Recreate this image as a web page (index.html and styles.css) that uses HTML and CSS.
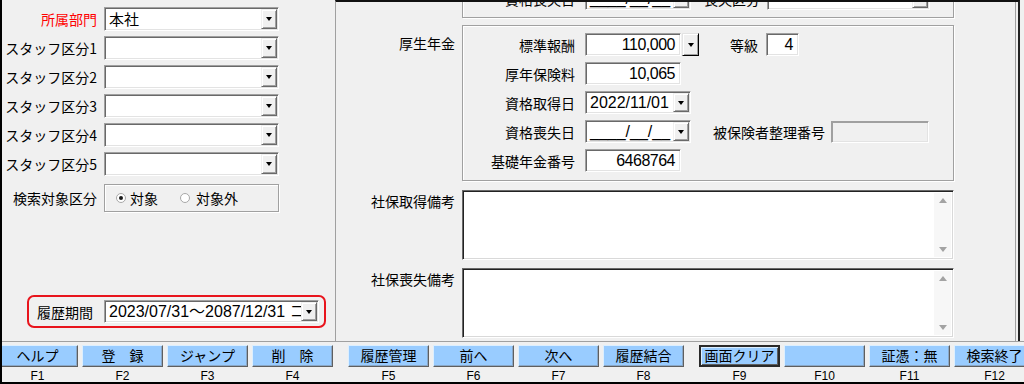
FILE: index.html
```html
<!DOCTYPE html>
<html lang="ja">
<head>
<meta charset="utf-8">
<title>社保情報</title>
<link rel="stylesheet" href="styles.css">
</head>
<body>
<div class="app">
  <div class="form">
    <div class="left">
      <div class="row"><span class="lbl red">所属部門</span><div class="combo w175"><span class="cv">本社</span><span class="dd"></span></div></div>
      <div class="row"><span class="lbl">スタッフ区分1</span><div class="combo w175"><span class="cv"></span><span class="dd"></span></div></div>
      <div class="row"><span class="lbl">スタッフ区分2</span><div class="combo w175"><span class="cv"></span><span class="dd"></span></div></div>
      <div class="row"><span class="lbl">スタッフ区分3</span><div class="combo w175"><span class="cv"></span><span class="dd"></span></div></div>
      <div class="row"><span class="lbl">スタッフ区分4</span><div class="combo w175"><span class="cv"></span><span class="dd"></span></div></div>
      <div class="row"><span class="lbl">スタッフ区分5</span><div class="combo w175"><span class="cv"></span><span class="dd"></span></div></div>
      <div class="row radio-row"><span class="lbl">検索対象区分</span>
        <div class="radiogroup">
          <span class="radio on"></span><span class="rtext">対象</span>
          <span class="radio second"></span><span class="rtext">対象外</span>
        </div>
      </div>
      <div class="period">
        <span class="plbl">履歴期間</span>
        <div class="combo pcombo"><span class="cv">2023/07/31～2087/12/31 コ</span><span class="dd"></span></div>
      </div>
    </div>
    <div class="right">
      <div class="sec top-sec">
        <div class="side"></div>
        <div class="group top-group">
          <div class="frow">
            <span class="flbl">資格喪失日</span>
            <div class="combo w106"><span class="cv">____/__/__</span><span class="dd"></span></div>
            <span class="olbl lbl-soushitsu">喪失区分</span>
            <div class="combo w163"><span class="cv"></span><span class="dd"></span></div>
          </div>
        </div>
      </div>
      <div class="sec kousei">
        <div class="side">厚生年金</div>
        <div class="group main-group">
          <div class="frow">
            <span class="flbl">標準報酬</span>
            <div class="field w96 num">110,000</div>
            <span class="dd solo"></span>
            <span class="olbl lbl-tokyu">等級</span>
            <div class="field w33 num">4</div>
          </div>
          <div class="frow">
            <span class="flbl">厚年保険料</span>
            <div class="field w96 num">10,065</div>
          </div>
          <div class="frow">
            <span class="flbl">資格取得日</span>
            <div class="combo w106"><span class="cv">2022/11/01</span><span class="dd"></span></div>
          </div>
          <div class="frow">
            <span class="flbl">資格喪失日</span>
            <div class="combo w106"><span class="cv">____/__/__</span><span class="dd"></span></div>
            <span class="olbl lbl-hihoken">被保険者整理番号</span>
            <div class="field w98 disabled"></div>
          </div>
          <div class="frow">
            <span class="flbl">基礎年金番号</span>
            <div class="field w96 num">6468764</div>
          </div>
        </div>
      </div>
      <div class="sec memo-sec">
        <div class="side memo-lbl">社保取得備考</div>
        <div class="memo"><div class="memo-body"></div><div class="sb"><span class="up"></span><span class="down"></span></div></div>
      </div>
      <div class="sec memo-sec second-memo">
        <div class="side memo-lbl">社保喪失備考</div>
        <div class="memo"><div class="memo-body"></div><div class="sb"><span class="up"></span><span class="down"></span></div></div>
      </div>
    </div>
  </div>
  <div class="toolbar">
    <div class="kgroup">
      <div class="key"><div class="btn">ヘルプ</div><span class="fk">F1</span></div>
      <div class="key"><div class="btn">登　録</div><span class="fk">F2</span></div>
      <div class="key"><div class="btn">ジャンプ</div><span class="fk">F3</span></div>
      <div class="key"><div class="btn">削　除</div><span class="fk">F4</span></div>
    </div>
    <div class="kgroup">
      <div class="key"><div class="btn">履歴管理</div><span class="fk">F5</span></div>
      <div class="key"><div class="btn">前へ</div><span class="fk">F6</span></div>
      <div class="key"><div class="btn">次へ</div><span class="fk">F7</span></div>
      <div class="key"><div class="btn">履歴結合</div><span class="fk">F8</span></div>
    </div>
    <div class="kgroup">
      <div class="key"><div class="btn focus">画面クリア</div><span class="fk">F9</span></div>
      <div class="key"><div class="btn"></div><span class="fk">F10</span></div>
      <div class="key"><div class="btn">証憑：無</div><span class="fk">F11</span></div>
      <div class="key"><div class="btn">検索終了</div><span class="fk">F12</span></div>
    </div>
  </div>
</div>
</body>
</html>
```
FILE: styles.css
```css
* { box-sizing: border-box; margin: 0; padding: 0; }
html, body { width: 1024px; height: 384px; overflow: hidden; background: #f0f0f0; }
body {
  font-family: "Noto Sans CJK JP", "Noto Sans", sans-serif;
  font-size: 14px;
  color: #000;
}
.app {
  width: 1024px;
  height: 384px;
  display: flex;
  flex-direction: column;
  border-left: 2px solid #000;
  border-bottom: 2px solid #000;
  overflow: hidden;
}
.form {
  display: flex;
  height: 342px;
  flex-shrink: 0;
  border-bottom: 1px solid #a0a0a0;
}

/* ---------- left panel ---------- */
.left {
  width: 333px;
  flex-shrink: 0;
  display: flex;
  flex-direction: column;
  padding-top: 7px;
}
.row {
  display: flex;
  align-items: center;
  height: 24px;
  margin-bottom: 5px;
}
.lbl {
  width: 95px;
  margin-right: 7px;
  text-align: right;
  white-space: nowrap;
  line-height: 24px;
}
.red { color: #f00; }
.radio-row { margin-top: 3px; height: 28px; }
.radiogroup {
  width: 175px;
  height: 28px;
  border: 1px solid #a0a0a0;
  box-shadow: inset 1px 1px 0 #fff, 1px 1px 0 #fff;
  display: flex;
  align-items: center;
  padding-left: 11px;
}
.radio {
  width: 10px;
  height: 10px;
  border-radius: 50%;
  border: 1px solid #a8a8a8;
  background: #fff;
  display: flex;
  align-items: center;
  justify-content: center;
  margin-right: 4px;
}
.radio.on::after {
  content: "";
  width: 4px;
  height: 4px;
  border-radius: 50%;
  background: #1a1a1a;
}
.radio.second { margin-left: 22px; margin-right: 6px; }
.rtext { line-height: 20px; }

.period {
  margin-top: auto;
  margin-bottom: 13px;
  margin-left: 25px;
  width: 299px;
  height: 33px;
  border: 2px solid #e8141c;
  border-radius: 7px;
  display: flex;
  align-items: center;
  padding-left: 8px;
}
.plbl { width: 58px; margin-right: 9px; white-space: nowrap; }
.pcombo { width: 215px; height: 22px; }

/* ---------- combos / fields ---------- */
.combo {
  display: flex;
  height: 23px;
  background: #fff;
  border: 1px solid;
  border-color: #a0a0a0 #fff #fff #a0a0a0;
  box-shadow: inset 1px 1px 0 #696969, inset -1px -1px 0 #e3e3e3;
  padding: 1px;
  flex-shrink: 0;
}
.row .combo { height: 24px; }
.w175 { width: 175px; }
.w106 { width: 106px; }
.w163 { width: 163px; }
.w96 { width: 96px; }
.w98 { width: 98px; }
.w33 { width: 33px; }
.cv {
  flex: 1;
  min-width: 0;
  overflow: hidden;
  white-space: nowrap;
  padding-left: 3px;
  font-family: "Liberation Sans", "Noto Sans CJK JP", sans-serif;
  font-size: 16px;
  line-height: 19px;
}
.row .cv {
  font-family: "Noto Sans CJK JP", sans-serif;
  font-size: 15px;
  line-height: 20px;
}
.dd {
  width: 16px;
  flex-shrink: 0;
  background: #f0f0f0;
  border: 1px solid;
  border-color: #f0f0f0 #696969 #696969 #f0f0f0;
  box-shadow: inset 1px 1px 0 #fff, inset -1px -1px 0 #a0a0a0;
  display: flex;
  align-items: center;
  justify-content: center;
}
.dd::after {
  content: "";
  width: 0;
  height: 0;
  border-left: 3.5px solid transparent;
  border-right: 3.5px solid transparent;
  border-top: 4px solid #000;
}
.dd.solo {
  width: 17px;
  height: 23px;
  margin-left: 1px;
  border-color: #e3e3e3 #000 #000 #e3e3e3;
}
.field {
  height: 23px;
  flex-shrink: 0;
  background: #fff;
  border: 1px solid;
  border-color: #a0a0a0 #fff #fff #a0a0a0;
  box-shadow: inset 1px 1px 0 #696969, inset -1px -1px 0 #e3e3e3;
  padding: 1px 5px 0 3px;
  text-align: right;
  white-space: nowrap;
}
.num {
  font-family: "Liberation Sans", sans-serif;
  font-size: 16px;
  letter-spacing: -0.5px;
  line-height: 19px;
}
.field.disabled {
  height: 22px;
  background: #f0f0f0;
  box-shadow: inset 1px 1px 0 #a0a0a0, inset -1px -1px 0 #e3e3e3;
}

/* ---------- right panel ---------- */
.right {
  width: 685px;
  flex-shrink: 0;
  border-left: 1px solid #a0a0a0;
  border-top: 2px solid #111;
  border-right: 2px solid #222;
  box-shadow: inset -2px 0 0 #f0f0f0, inset -3px 0 0 #a0a0a0;
  overflow: hidden;
  display: flex;
  flex-direction: column;
}
.sec { display: flex; flex-shrink: 0; }
.side {
  width: 119px;
  margin-right: 7px;
  flex-shrink: 0;
  text-align: right;
  white-space: nowrap;
}
.group {
  width: 492px;
  border: 1px solid #a0a0a0;
  box-shadow: inset 1px 1px 0 #fff, 1px 1px 0 #fff;
}
.top-sec { margin-top: -40px; }
.top-group { padding: 24px 0 7px; }
.kousei { margin-top: 7px; }
.kousei .side { padding-top: 8px; line-height: 20px; }
.main-group { padding: 7px 0 8px; }
.frow {
  display: flex;
  align-items: center;
  height: 23px;
  margin-bottom: 6px;
}
.frow:last-child { margin-bottom: 0; }
.flbl {
  width: 112px;
  margin-right: 10px;
  text-align: right;
  white-space: nowrap;
}
.olbl { white-space: nowrap; }
.lbl-soushitsu { margin-left: 13px; margin-right: 7px; }
.lbl-tokyu { margin-left: 31px; margin-right: 8px; }
.lbl-hihoken { margin-left: 22px; margin-right: 6px; }

.memo-sec { margin-top: 9px; }
.memo-sec.second-memo { margin-top: 8px; }
.memo-lbl { padding-top: 1px; line-height: 20px; }
.memo {
  width: 492px;
  height: 70px;
  display: flex;
  background: #fff;
  border: 1px solid;
  border-color: #696969 #fff #fff #696969;
  box-shadow: inset 1px 1px 0 #222, inset -1px -1px 0 #d9d9d9;
  padding: 2px 2px 2px 2px;
}
.memo-body { flex: 1; }
.sb {
  width: 17px;
  background: #f7f7f7;
  display: flex;
  flex-direction: column;
  justify-content: space-between;
  align-items: center;
  padding: 5px 0 5px;
}
.up, .down {
  width: 0;
  height: 0;
  border-left: 4.5px solid transparent;
  border-right: 4.5px solid transparent;
}
.up { border-bottom: 5px solid #a3a3a3; }
.down { border-top: 5px solid #a3a3a3; }

/* ---------- toolbar ---------- */
.toolbar {
  display: flex;
  gap: 15px;
  margin-left: -5px;
  padding-top: 3px;
  flex-shrink: 0;
}
.kgroup { display: flex; gap: 4px; flex-shrink: 0; }
.key {
  width: 81px;
  flex-shrink: 0;
  display: flex;
  flex-direction: column;
  align-items: center;
}
.btn {
  width: 100%;
  height: 22px;
  background: #99ccff;
  border: 1px solid;
  border-color: #dcefff #5f5f5f #5f5f5f #dcefff;
  box-shadow: inset -1px -1px 0 #8aa8c8;
  text-align: center;
  line-height: 19px;
  font-size: 14px;
  white-space: nowrap;
}
.btn.focus {
  border: 2px solid #2a2a2a;
  line-height: 17px;
  box-shadow: inset 1px 1px 0 #dcefff, inset -1px -1px 0 #5f5f5f;
}
.fk {
  font-family: "Liberation Sans", sans-serif;
  font-size: 12px;
  line-height: 14px;
  margin-top: 2px;
}
```
